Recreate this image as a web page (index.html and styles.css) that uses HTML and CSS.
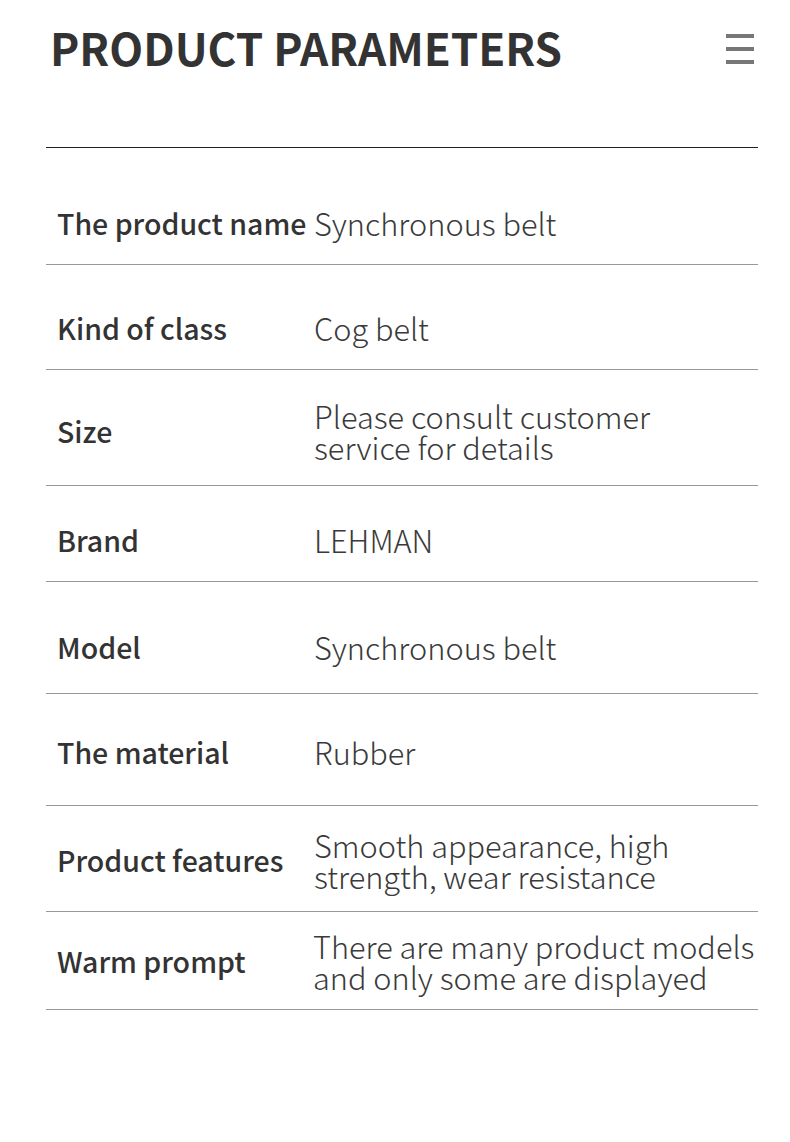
FILE: index.html
```html
<!DOCTYPE html>
<html>
<head>
<meta charset="utf-8">
<link rel="stylesheet" href="styles.css">
</head>
<body>
<div class="page">
  <header class="head">
    <h1 class="title">PRODUCT PARAMETERS</h1>
    <div class="menu"><span></span><span></span><span></span></div>
  </header>
  <div class="table">
    <div class="row h1"><div class="label">The product name</div><div class="value">Synchronous belt</div></div>
    <div class="row h2"><div class="label">Kind of class</div><div class="value">Cog belt</div></div>
    <div class="row h3"><div class="label">Size</div><div class="value">Please consult customer<br>service for details</div></div>
    <div class="row h4"><div class="label">Brand</div><div class="value">LEHMAN</div></div>
    <div class="row h5"><div class="label">Model</div><div class="value">Synchronous belt</div></div>
    <div class="row h6"><div class="label">The material</div><div class="value">Rubber</div></div>
    <div class="row h7"><div class="label">Product features</div><div class="value">Smooth appearance, high<br>strength, wear resistance</div></div>
    <div class="row h8"><div class="label">Warm prompt</div><div class="value shift">There are many product models<br>and only some are displayed</div></div>
  </div>
</div>
</body>
</html>
```
FILE: styles.css
```css
html, body { margin: 0; padding: 0; background: #fff; }
body { font-family: "Noto Sans CJK SC", "Noto Sans", sans-serif; color: #333; }
.page { width: 790px; height: 1142px; overflow: hidden; }
.head { display: flex; justify-content: space-between; align-items: flex-start; border-bottom: 1.5px solid #222; margin: 0 32px 0 46px; padding: 21px 4px 0 4px; box-sizing: border-box; height: 148px; }
.title { margin: 0; font-size: 44px; font-weight: 700; line-height: 52px; color: #333; }
.menu { display: flex; flex-direction: column; gap: 9px; padding-top: 13px; }
.menu span { display: block; width: 28px; height: 4px; background: #777; }
.table { margin: 0 32px 0 46px; }
.row { display: flex; align-items: center; border-bottom: 1.5px solid #999; box-sizing: border-box; }
.label { width: 268px; padding-left: 11px; box-sizing: border-box; font-size: 28.5px; font-weight: 500; color: #333; white-space: nowrap; }
.value { font-size: 30.7px; font-weight: 300; color: #3a3a3a; line-height: 31px; white-space: nowrap; }
.value.shift { margin-left: -1px; }
.h1 { height: 117px; padding-top: 32px; }
.h2 { height: 105px; padding-top: 20px; }
.h3 { height: 116px; padding-top: 6px; }
.h4 { height: 96px; padding-top: 12px; }
.h5 { height: 112px; padding-top: 18px; }
.h6 { height: 112px; padding-top: 4px; }
.h7 { height: 106px; padding-top: 2px; }
.h8 { height: 98px; }
```
